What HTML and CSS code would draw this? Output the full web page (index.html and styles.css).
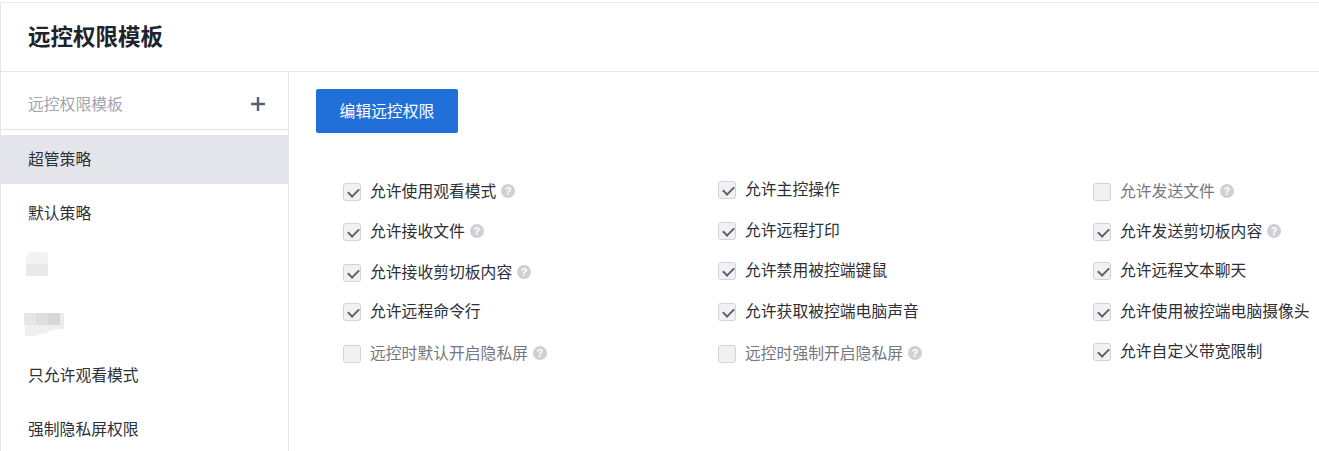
FILE: index.html
```html
<!DOCTYPE html>
<html lang="zh-CN">
<head>
<meta charset="utf-8">
<title>远控权限模板</title>
<link rel="stylesheet" href="styles.css">
</head>
<body>
<div class="page">
  <header class="title-bar"><h1>远控权限模板</h1></header>
  <div class="main">
    <aside class="side">
      <div class="side-head">
        <span>远控权限模板</span>
        <svg class="plus" width="14" height="14" viewBox="0 0 14 14"><path d="M5.8 0h2.4v5.8H14v2.4H8.2V14H5.8V8.2H0V5.8h5.8z" fill="#5a5f6b"/></svg>
      </div>
      <ul class="side-list">
        <li class="active">超管策略</li>
        <li>默认策略</li>
        <li><svg class="blur" width="22" height="24" viewBox="0 0 22 24"><path d="M4 0h16v1h2v11H0V4h2V2h2z" fill="#f3f3f3"/><path d="M0 12h22v12H0z" fill="#e9e8ea"/></svg></li>
        <li><svg class="blur blur-b" width="40" height="24" viewBox="0 0 40 24"><path d="M0 0h12v12H0z" fill="#e6e6e7"/><path d="M12 0h12v12H12z" fill="#dedede"/><path d="M24 0h12v12H24z" fill="#d7d7d8"/><path d="M36 0h4v16h-4z" fill="#ececed"/><path d="M1 12h35v4l-12 2v2l-12 2v1H1z" fill="#efefef"/></svg></li>
        <li>只允许观看模式</li>
        <li>强制隐私屏权限</li>
      </ul>
    </aside>
    <section class="content">
      <button class="edit-btn" type="button">编辑远控权限</button>
      <div class="perms">
        <div class="perm"><i class="box on"></i><span>允许使用观看模式</span><i class="help">?</i></div>
        <div class="perm up2"><i class="box on"></i><span>允许主控操作</span></div>
        <div class="perm off"><i class="box"></i><span>允许发送文件</span><i class="help">?</i></div>

        <div class="perm"><i class="box on"></i><span>允许接收文件</span><i class="help">?</i></div>
        <div class="perm up1"><i class="box on"></i><span>允许远程打印</span></div>
        <div class="perm"><i class="box on"></i><span>允许发送剪切板内容</span><i class="help">?</i></div>

        <div class="perm"><i class="box on"></i><span>允许接收剪切板内容</span><i class="help">?</i></div>
        <div class="perm up2"><i class="box on"></i><span>允许禁用被控端键鼠</span></div>
        <div class="perm up2"><i class="box on"></i><span>允许远程文本聊天</span></div>

        <div class="perm"><i class="box on"></i><span>允许远程命令行</span></div>
        <div class="perm"><i class="box on"></i><span>允许获取被控端电脑声音</span></div>
        <div class="perm"><i class="box on"></i><span>允许使用被控端电脑摄像头</span></div>

        <div class="perm off"><i class="box"></i><span>远控时默认开启隐私屏</span><i class="help">?</i></div>
        <div class="perm off"><i class="box"></i><span>远控时强制开启隐私屏</span><i class="help">?</i></div>
        <div class="perm up2"><i class="box on"></i><span>允许自定义带宽限制</span></div>
      </div>
    </section>
  </div>
</div>
</body>
</html>
```
FILE: styles.css
```css
* { box-sizing: border-box; }
html, body { margin: 0; height: 100%; overflow: hidden; background: #fff; }
body { font-family: "Noto Sans CJK SC", "Liberation Sans", sans-serif; color: #252830; font-size: 15.8px; }
ul { list-style: none; margin: 0; padding: 0; }

.page { height: 451px; margin-top: 2px; border-top: 1px solid #ebebee; border-left: 1px solid #e6e6ea; }
.title-bar { height: 69px; display: flex; align-items: center; padding: 0 0 4px 27px; border-bottom: 1px solid #e6e6ea; }
.title-bar h1 { margin: 0; font-size: 22.5px; font-weight: 700; line-height: 30px; color: #20232b; }

.main { display: flex; height: 379px; }
.side { width: 288px; flex: none; border-right: 1px solid #e6e6ea; }
.side-head { height: 58px; display: flex; align-items: center; justify-content: space-between; padding: 13px 23px 7px 27px; border-bottom: 1px solid #e6e6ea; color: #a2a5ae; }
.side-list { padding-top: 5px; }
.side-list li { height: 54px; display: flex; align-items: center; padding: 0 0 4px 27px; color: #2c2f38; }
.side-list li.active { height: 49px; margin-bottom: 3px; padding-bottom: 2px; background: #e4e5ea; }
.side-list .blur { margin: 0 0 4px -2px; }
.side-list .blur-b { margin: 10px 0 0 -4px; }

.content { flex: 1; min-width: 0; padding: 17px 0 0 27px; }
.edit-btn { display: block; width: 142px; height: 44px; padding: 0 0 2px; border: 0; border-radius: 2px; background: #2170d9; color: #fff; font: inherit; }

.perms { display: grid; grid-template-columns: 375px 375px 230px; grid-template-rows: 40px 41px 39px 42px 40px; margin: 39px 0 0 27px; }
.perm { display: flex; align-items: center; white-space: nowrap; height: 40px; color: #2c2f38; line-height: 24px; }
.perm span { margin-bottom: 2px; }
.perm.up1 { margin-top: -1px; }
.perm.up2 { margin-top: -2px; }
.perm.off { color: #747781; }
.box { flex: none; width: 18px; height: 18px; margin-right: 9px; border: 1px solid #d2d3d9; border-radius: 3px; background: #f1f1f4; position: relative; }
.box.on::after { content: ""; position: absolute; left: 3.5px; top: 3.5px; width: 9px; height: 5px; border-left: 2.4px solid #5c606c; border-bottom: 2.4px solid #5c606c; transform: rotate(-45deg); }
.help { flex: none; width: 14px; height: 14px; margin: 0 0 3px 5px; border-radius: 50%; background: #cfd0d6; color: #fff; font: 700 11px/14px "Liberation Sans", sans-serif; text-align: center; }
```
